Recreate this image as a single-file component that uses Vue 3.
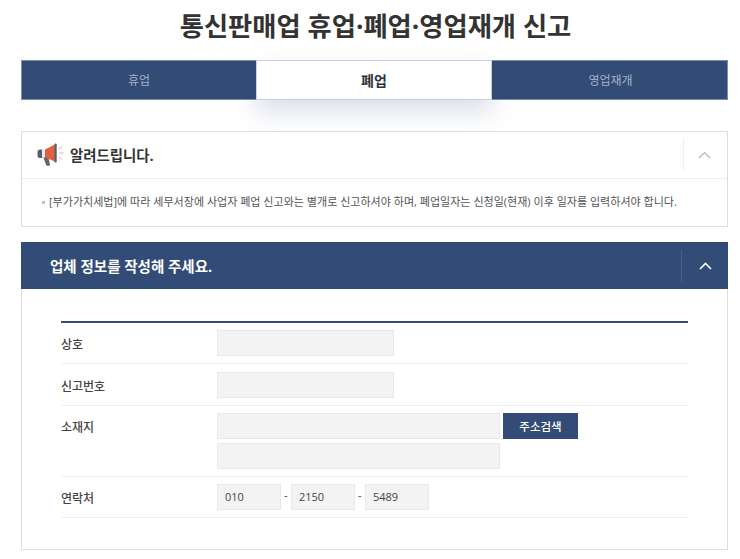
<script setup>
const tabs = [
  { label: '휴업', active: false },
  { label: '폐업', active: true },
  { label: '영업재개', active: false },
]
</script>

<template>
  <div class="page">
    <h1 class="title">통신판매업 휴업·폐업·영업재개 신고</h1>

    <div class="tabs">
      <div v-for="t in tabs" :key="t.label" class="tab" :class="{ active: t.active }">{{ t.label }}</div>
    </div>

    <section class="notice">
      <div class="notice-head">
        <svg class="horn" width="27" height="24" viewBox="0 0 27 24">
          <rect x="0.5" y="6.5" width="6" height="8.5" rx="2.5" fill="#54606e" />
          <path d="M6 13.5h5l2 8a1 1 0 0 1-1 1.2H10.2a1 1 0 0 1-1-.8z" fill="#5a6675" />
          <path d="M5 6.5 L8 6.5 L8 14.5 L5 14.5 Z" fill="#ececec" />
          <path d="M8 6.5 L18 1.5 L18 18.5 L8 14.5 Z" fill="#e2603f" />
          <rect x="17.5" y="0.5" width="2.2" height="19" rx="1" fill="#54606e" />
          <path d="M22 6l3-2.5M22.5 10h4M22 14l3 2.5" stroke="#b9bec6" stroke-width="1" fill="none" />
        </svg>
        <strong class="notice-title">알려드립니다.</strong>
        <div class="toggle light">
          <svg width="13" height="8" viewBox="0 0 13 8"><path d="M1 7l5.5-5.5L12 7" fill="none" stroke="#b5b5b5" stroke-width="1.2" /></svg>
        </div>
      </div>
      <p class="notice-body"><span class="bullet"></span>[부가가치세법]에 따라 세무서장에 사업자 폐업 신고와는 별개로 신고하셔야 하며, 폐업일자는 신청일(현재) 이후 일자를 입력하셔야 합니다.</p>
    </section>

    <section class="form-panel">
      <div class="form-head">
        <strong>업체 정보를 작성해 주세요.</strong>
        <div class="toggle dark">
          <svg width="13" height="8" viewBox="0 0 13 8"><path d="M1 7l5.5-5.5L12 7" fill="none" stroke="#fff" stroke-width="1.6" /></svg>
        </div>
      </div>
      <div class="form-body">
        <div class="row">
          <div class="label">상호</div>
          <div class="box w177"></div>
        </div>
        <div class="row second">
          <div class="label">신고번호</div>
          <div class="box w177"></div>
        </div>
        <div class="row">
          <div class="label">소재지</div>
          <div class="addr-fields">
            <div class="addr-line">
              <div class="box w283"></div>
              <div class="btn">주소검색</div>
            </div>
            <div class="box w283"></div>
          </div>
        </div>
        <div class="row">
          <div class="label">연락처</div>
          <div class="phone">
            <div class="box num">010</div>
            <span class="dash">-</span>
            <div class="box num">2150</div>
            <span class="dash">-</span>
            <div class="box num">5489</div>
          </div>
        </div>
      </div>
    </section>
  </div>
</template>

<style scoped>
.page {
  width: 707px;
  margin-left: 21px;
  font-family: "Open Sans", "Noto Sans CJK KR", sans-serif;
  color: #333;
}
.title {
  margin: 0;
  height: 60px;
  padding: 8px 0 0 2px;
  box-sizing: border-box;
  line-height: 36px;
  font-size: 26.3px;
  font-weight: 700;
  text-align: center;
  color: #333;
}
.tabs {
  display: flex;
  height: 40px;
}
.tab {
  flex: 0 0 236px;
  box-sizing: border-box;
  display: flex;
  align-items: center;
  justify-content: center;
  background: #334b77;
  border: 1px solid #7f90ad;
  border-left: 0;
  border-right: 0;
  color: #a6b2c6;
  font-size: 12px;
}
.tab:first-child {
  flex-basis: 235px;
  border-left: 1px solid #7f90ad;
}
.tab:last-child {
  padding-left: 2px;
  border-right: 1px solid #7f90ad;
}
.tab.active {
  background: #fff;
  border: 1px solid #c9d0e3;
  color: #333;
  font-size: 14px;
  font-weight: 700;
  box-shadow: 0 12px 24px rgba(50, 76, 121, 0.18);
  position: relative;
}
.notice {
  margin-top: 31px;
  height: 96px;
  box-sizing: border-box;
  border: 1px solid #dedede;
}
.notice-head {
  height: 46px;
  display: flex;
  align-items: center;
  padding-left: 15px;
  border-bottom: 1px solid #eee;
}
.horn { margin-right: 6px; }
.notice-title {
  font-size: 14.4px;
  margin-top: -2px;
  color: #333;
}
.toggle {
  margin-left: auto;
  height: 32px;
  display: flex;
  align-items: center;
  justify-content: center;
  box-sizing: border-box;
}
.toggle.light {
  width: 44px;
  padding-right: 2px;
  border-left: 1px solid #eee;
}
.toggle.dark {
  width: 47px;
  border-left: 1px solid #47608b;
}
.notice-body {
  margin: 0;
  padding-left: 20px;
  height: 47px;
  line-height: 45px;
  font-size: 11.04px;
  color: #555;
  white-space: nowrap;
}
.bullet {
  display: inline-block;
  width: 3px;
  height: 3px;
  background: #c4c4c4;
  margin-right: 4px;
  vertical-align: 2px;
}
.form-panel {
  margin-top: 15px;
  height: 308px;
  box-sizing: border-box;
  border: 1px solid #dedede;
  border-top: 0;
}
.form-head {
  margin: 0 -1px;
  height: 47px;
  background: #334b77;
  display: flex;
  align-items: center;
  padding-left: 29px;
  color: #fff;
  font-size: 14.5px;
}
.form-body {
  padding: 32px 39px 0 39px;
}
.row {
  display: flex;
  align-items: flex-start;
  padding: 7px 0;
  border-bottom: 1px solid #f0f0f0;
}
.row:first-child {
  border-top: 2px solid #334b77;
}
.row.second {
  padding-top: 8px;
}
.label {
  width: 156px;
  height: 26px;
  font-size: 12px;
  font-weight: 500;
  line-height: 30px;
  color: #444;
  flex: none;
}
.box {
  height: 26px;
  box-sizing: border-box;
  background: #f3f3f3;
  border: 1px solid #e9e9e9;
  font-size: 11px;
  line-height: 24px;
  color: #444;
}
.w177 { width: 177px; }
.w283 { width: 283px; }
.addr-fields {
  display: flex;
  flex-direction: column;
  gap: 4px;
}
.addr-line {
  display: flex;
  gap: 3px;
}
.btn {
  width: 75px;
  height: 26px;
  display: flex;
  align-items: center;
  justify-content: center;
  background: #334b77;
  color: #fff;
  font-size: 11.5px;
  font-weight: 500;
}
.phone {
  display: flex;
  align-items: center;
}
.num {
  width: 63.5px;
  padding-left: 7px;
}
.dash {
  width: 10.5px;
  text-align: center;
  font-size: 11px;
  color: #444;
  margin-top: -5px;
}
</style>

<style>
html, body { background: #fff; overflow: hidden; }
</style>
